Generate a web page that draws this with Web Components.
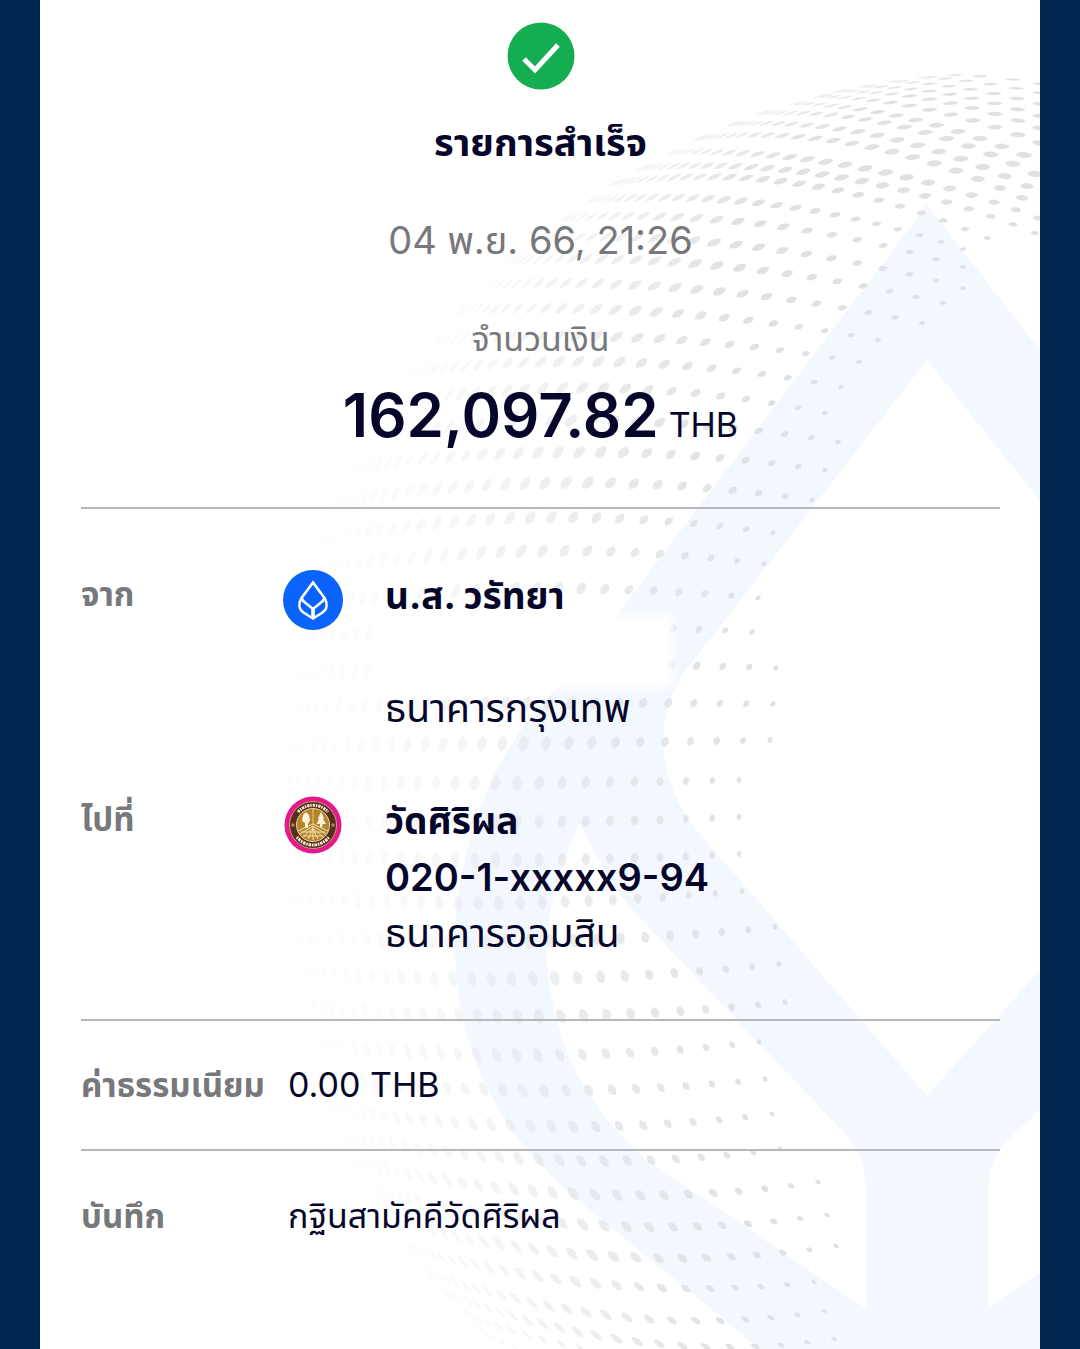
<!DOCTYPE html>
<html lang="th">
<head>
<meta charset="utf-8">
<meta name="viewport" content="width=device-width, initial-scale=1">
<title>รายการสำเร็จ</title>
<style>
  * {
    box-sizing: border-box;
  }
  body {
    margin: 0;
    background: #00284f;
    color: #05062a;
    font-family: Inter, "Noto Sans Thai", "Noto Sans", sans-serif;
  }
</style>
</head>
<body>
<slip-page>
  <slip-status>
    <span slot="title">รายการสำเร็จ</span>
    <span slot="date">04 พ.ย. 66, 21:26</span>
  </slip-status>
  <slip-amount currency="THB">
    <span slot="label">จำนวนเงิน</span>
    162,097.82
  </slip-amount>
  <slip-section>
    <slip-party label="จาก" name="น.ส. วรัทยา" account="" bank="ธนาคารกรุงเทพ">
      <bangkok-bank-logo></bangkok-bank-logo>
    </slip-party>
    <slip-party label="ไปที่" name="วัดศิริผล" account="020-1-xxxxx9-94" bank="ธนาคารออมสิน">
      <gsb-logo></gsb-logo>
    </slip-party>
  </slip-section>
  <slip-detail label="ค่าธรรมเนียม">0.00 THB</slip-detail>
  <slip-detail label="บันทึก">กฐินสามัคคีวัดศิริผล</slip-detail>
</slip-page>

<script>
class SlipPage extends HTMLElement {
  constructor() {
    super();
    this.attachShadow({ mode: "open" });
  }

  connectedCallback() {
    this.shadowRoot.innerHTML = `
      <style>
        :host { display: block; padding: 0 40px; }
        main {
          position: relative;
          box-sizing: border-box;
          min-height: 100vh;
          padding: 22px 40px 0 41px;
          background: #fff;
          overflow: hidden;
        }
        .content { position: relative; }
      </style>
      <main>
        <slip-watermark></slip-watermark>
        <div class="content"><slot></slot></div>
      </main>
    `;
  }
}

// Dotted globe: one entry per row of dots.
// [y at the left limb, middle x, middle y, last x, last y]
const GLOBE = { x: 1000, y: 810, r: 737 };
const DOT_ROWS = [
  [75, 1000, 78, 1040, 84], [77, 990, 84, 1040, 93], [81, 980, 91, 1040, 104],
  [86, 970, 98, 1040, 116], [91, 955, 104, 1040, 128], [96, 940, 112, 1040, 143],
  [103, 928, 123, 1024, 155], [113, 908, 128, 1035, 174], [124, 847, 130, 1027, 186],
  [138, 837, 141, 1022, 198], [152, 852, 166, 1038, 218], [168, 787, 170, 1035, 233],
  [183, 725, 177, 987, 238], [200, 728, 200, 963, 249], [218, 723, 220, 963, 267],
  [238, 697, 241, 963, 288], [260, 700, 264, 943, 303], [284, 667, 287, 922, 323],
  [310, 640, 311, 878, 340], [340, 622, 337, 859, 362], [372, 540, 362, 841, 387],
  [405, 530, 389, 825, 413], [436, 520, 422, 838, 442], [468, 520, 453, 825, 470],
  [502, 513, 484, 812, 500], [540, 480, 520, 773, 533], [572, 445, 555, 764, 564],
  [606, 480, 590, 758, 598], [640, 480, 628, 752, 632], [675, 480, 666, 776, 668],
  [709, 480, 704, 773, 704], [745, 480, 744, 770, 740], [782, 480, 783, 739, 780],
  [818, 480, 822, 739, 817], [855, 480, 860, 739, 854], [895, 480, 903, 742, 891],
  [935, 480, 942, 775, 927], [970, 480, 979, 779, 964], [1005, 480, 1016, 785, 1002],
  [1042, 500, 1055, 759, 1042], [1076, 500, 1090, 765, 1079], [1108, 520, 1126, 772, 1114],
  [1135, 550, 1160, 780, 1149], [1162, 580, 1194, 818, 1182], [1190, 610, 1226, 827, 1215],
  [1220, 580, 1254, 836, 1246], [1248, 600, 1284, 814, 1282], [1272, 530, 1302, 824, 1311],
  [1292, 547, 1325, 834, 1339], [1312, 517, 1332, 700, 1360], [1328, 520, 1350, 640, 1366]
];

function globeDots() {
  let out = "";
  for (const [yl, xm, ym, xr, yr] of DOT_ROWS) {
    const w = Math.sqrt(GLOBE.r ** 2 - (yl - GLOBE.y) ** 2);
    const xl = GLOBE.x - w;
    const first = Math.acos((GLOBE.x - xr) / w);
    const pitch = yr < 260 ? 22 : 27;
    const step = pitch / (w * Math.sin(first));
    // the dots shrink towards the end of a row; the top rows run on past the card
    const end = xr + Math.max(0, 250 - yr) * 3;
    for (let a = first; a > 0.1; a -= step) {
      const x = GLOBE.x - w * Math.cos(a);
      const y =
        yl * (x - xm) * (x - xr) / ((xl - xm) * (xl - xr)) +
        ym * (x - xl) * (x - xr) / ((xm - xl) * (xm - xr)) +
        yr * (x - xl) * (x - xm) / ((xr - xl) * (xr - xm));
      const dx = x - GLOBE.x;
      const dy = y - GLOBE.y;
      const rho = Math.min(0.99, Math.hypot(dx, dy) / GLOBE.r);
      const s = Math.min(8, 3.2 + (end - x) * 0.02);
      const h = Math.max(1, s * Math.sqrt(1 - rho * rho) * 0.78);
      const turn = Math.atan2(dy, dx) * 180 / Math.PI + 90;
      const fade = Math.max(0.1, Math.min(1, (x - 270) / 480)) * Math.min(1, 0.25 + a * 0.8);
      out += `<path transform="translate(${x.toFixed(1)} ${y.toFixed(1)}) rotate(${turn.toFixed(1)})"
        d="M${-s} 0C${-s * 0.7} ${-h * 1.3} ${s * 0.4} ${-h * 1.5} ${s} 0C${s * 0.7} ${h * 1.3} ${-s * 0.4} ${h * 1.5} ${-s} 0Z" opacity="${fade.toFixed(2)}"/>`;
    }
  }
  return out;
}

class SlipWatermark extends HTMLElement {
  constructor() {
    super();
    this.attachShadow({ mode: "open" });
  }

  connectedCallback() {
    this.shadowRoot.innerHTML = `
      <style>
        :host { position: absolute; inset: 0; display: block; }
        svg { display: block; width: 100%; height: 100%; }
      </style>
      <svg viewBox="40 0 1000 1349" preserveAspectRatio="xMidYMin slice" aria-hidden="true">
        <defs>
          <filter id="soft" x="-10%" y="-30%" width="120%" height="160%">
            <feGaussianBlur stdDeviation="4"/>
          </filter>
        </defs>
        <path fill="#f3f7fe" fill-rule="evenodd" d="
          M927 205L623 607L553 692C490 755 456 850 455 945C456 1060 505 1140 580 1202L760 1349H1094V420Z
          M927 360L690 665C655 708 653 770 693 826L927 1096L1094 910V568Z
          M580 822C590 845 605 875 628 905L847 1136C860 1152 866 1168 866 1188V1309L647 1160
          C585 1108 548 1035 547 950C548 900 563 860 580 822Z
          M988 1309V1189C989 1168 995 1154 1007 1140L1094 1062V1234Z"/>
        <g fill="#e0e1e4">${globeDots()}</g>
        <rect x="372" y="615" width="300" height="73" fill="#fff" filter="url(#soft)"/>
      </svg>
    `;
  }
}

class SlipStatus extends HTMLElement {
  constructor() {
    super();
    this.attachShadow({ mode: "open" });
  }

  connectedCallback() {
    this.shadowRoot.innerHTML = `
      <style>
        :host { display: block; text-align: center; }
        svg { display: block; width: 68px; height: 68px; margin: 0 auto; }
        h1 { margin: 22px 0 40px; font-size: 38px; line-height: 60px; font-weight: 700; }
        p { margin: 0; color: #77787b; font-size: 38px; line-height: 56px; font-weight: 400; }
      </style>
      <svg viewBox="0 0 68 68" aria-hidden="true">
        <circle cx="34" cy="34" r="33.500" fill="#14ad52"/>
        <path d="M17 37L28 48L51 23" fill="none" stroke="#fff" stroke-width="5"/>
      </svg>
      <h1><slot name="title"></slot></h1>
      <p><slot name="date"></slot></p>
    `;
  }
}

class SlipAmount extends HTMLElement {
  constructor() {
    super();
    this.attachShadow({ mode: "open" });
  }

  connectedCallback() {
    this.shadowRoot.innerHTML = `
      <style>
        :host {
          display: block;
          padding: 47px 0 54px;
          border-bottom: 2px solid #b6b8bc;
          text-align: center;
        }
        .label { color: #77787b; font-size: 34px; line-height: 48px; font-weight: 400; }
        .value {
          display: flex;
          justify-content: center;
          align-items: baseline;
          gap: 10px;
          margin-top: 14px;
          font-size: 60px;
          line-height: 76px;
          font-weight: 600;
        }
        small { font-size: 34px; line-height: 48px; font-weight: 400; }
      </style>
      <div class="label"><slot name="label"></slot></div>
      <div class="value"><span><slot></slot></span><small>${this.getAttribute("currency")}</small></div>
    `;
  }
}

class SlipSection extends HTMLElement {
  constructor() {
    super();
    this.attachShadow({ mode: "open" });
  }

  connectedCallback() {
    this.shadowRoot.innerHTML = `
      <style>
        :host {
          display: flex;
          flex-direction: column;
          gap: 57px;
          padding: 61px 0 56px;
          border-bottom: 2px solid #b6b8bc;
        }
      </style>
      <slot></slot>
    `;
  }
}

class SlipParty extends HTMLElement {
  constructor() {
    super();
    this.attachShadow({ mode: "open" });
  }

  connectedCallback() {
    const party = {
      label: this.getAttribute("label"),
      name: this.getAttribute("name"),
      account: this.getAttribute("account"),
      bank: this.getAttribute("bank"),
    };
    this.render(party);
  }

  render(data) {
    this.shadowRoot.innerHTML = `
      <style>
        :host { display: grid; grid-template-columns: 202px 102px 1fr; }
        .label { color: #77787b; font-size: 33px; line-height: 48px; font-weight: 700; }
        .lines { font-size: 38px; line-height: 52px; font-weight: 400; }
        .lines div { min-height: 56px; }
        .lines .name { font-size: 37px; font-weight: 700; }
        .lines .account { font-weight: 600; }
        .lines .bank { font-size: 39px; }
      </style>
      <div class="label">${data.label}</div>
      <div><slot></slot></div>
      <div class="lines">
        <div class="name">${data.name}</div>
        <div class="account">${data.account}</div>
        <div class="bank">${data.bank}</div>
      </div>
    `;
  }
}

class SlipDetail extends HTMLElement {
  constructor() {
    super();
    this.attachShadow({ mode: "open" });
  }

  connectedCallback() {
    this.shadowRoot.innerHTML = `
      <style>
        :host {
          display: grid;
          grid-template-columns: 207px 1fr;
          align-items: center;
          min-height: 130px;
          border-bottom: 2px solid #b6b8bc;
          font-size: 34px;
          line-height: 48px;
          font-weight: 400;
        }
        :host(:last-of-type) { border-bottom: 0; }
        .label { color: #77787b; font-size: 33px; font-weight: 700; white-space: nowrap; }
      </style>
      <div class="label">${this.getAttribute("label")}</div>
      <div><slot></slot></div>
    `;
  }
}

class BangkokBankLogo extends HTMLElement {
  constructor() {
    super();
    this.attachShadow({ mode: "open" });
  }

  connectedCallback() {
    this.shadowRoot.innerHTML = `
      <style>
        :host { display: block; }
        svg { display: block; width: 60px; height: 60px; }
      </style>
      <svg viewBox="0 0 60 60" role="img" aria-label="ธนาคารกรุงเทพ">
        <circle cx="30" cy="30" r="30" fill="#0a63fa"/>
        <g fill="none" stroke="#fff" stroke-width="2.600">
          <path d="M30 12.500L18.500 28C15 34 16 39.500 20.500 42.500L30 48.500L39.500 42.500C44 39.500 45 34 41.500 28Z"/>
          <path d="M18.800 28.500C19.500 30.500 20.500 31.500 22 32.500L30 39L38 32.500C39.500 31.500 40.500 30.500 41.200 28.500"/>
          <path d="M30 39V48" stroke-width="3.600"/>
        </g>
      </svg>
    `;
  }
}

class GsbLogo extends HTMLElement {
  constructor() {
    super();
    this.attachShadow({ mode: "open" });
  }

  connectedCallback() {
    this.shadowRoot.innerHTML = `
      <style>
        :host { display: block; }
        svg { display: block; width: 60px; height: 60px; }
      </style>
      <svg viewBox="0 0 60 60" role="img" aria-label="ธนาคารออมสิน">
        <circle cx="30" cy="30" r="28.500" fill="#e5188c"/>
        <circle cx="30" cy="30" r="23.500" fill="#56301b" stroke="#c9a070" stroke-width="1"/>
        <g fill="none" stroke="#f4e9d8" stroke-width="3">
          <path d="M15 17A20 20 0 0 1 45 17" stroke-dasharray="2.400 .8 1.400 .9"/>
          <path d="M14 42A20 20 0 0 0 46 42" stroke-dasharray="1.600 .8 2.600 .8"/>
        </g>
        <path d="M8 30H12M10 28V32M48 30H52M50 28V32" stroke="#c9a070" stroke-width="1"/>
        <circle cx="30" cy="30" r="16.500" fill="#b5852b" stroke="#e8d3a6" stroke-width="1"/>
        <path d="M30 14V29" stroke="#d6b467" stroke-width="1.500"/>
        <g fill="#fbf2dd">
          <path d="M20 20L23 17L26 20L27 25L25 29V33H22V28L19 26Z"/>
          <path d="M38 17L41 23L40 24L43 29H39.500V32H37V29H33.500L36 24L35 23Z"/>
        </g>
        <path d="M15 36L30 29L45 36M17 39L30 31L43 39M20 42L30 33L40 42M30 31V45M25 44L30 34L35 44M18 37H42M20 41H40"
          fill="none" stroke="#f0dfb4" stroke-width="1"/>
      </svg>
    `;
  }
}

customElements.define("slip-watermark", SlipWatermark);
customElements.define("bangkok-bank-logo", BangkokBankLogo);
customElements.define("gsb-logo", GsbLogo);
customElements.define("slip-status", SlipStatus);
customElements.define("slip-amount", SlipAmount);
customElements.define("slip-party", SlipParty);
customElements.define("slip-section", SlipSection);
customElements.define("slip-detail", SlipDetail);
customElements.define("slip-page", SlipPage);
</script>
</body>
</html>
